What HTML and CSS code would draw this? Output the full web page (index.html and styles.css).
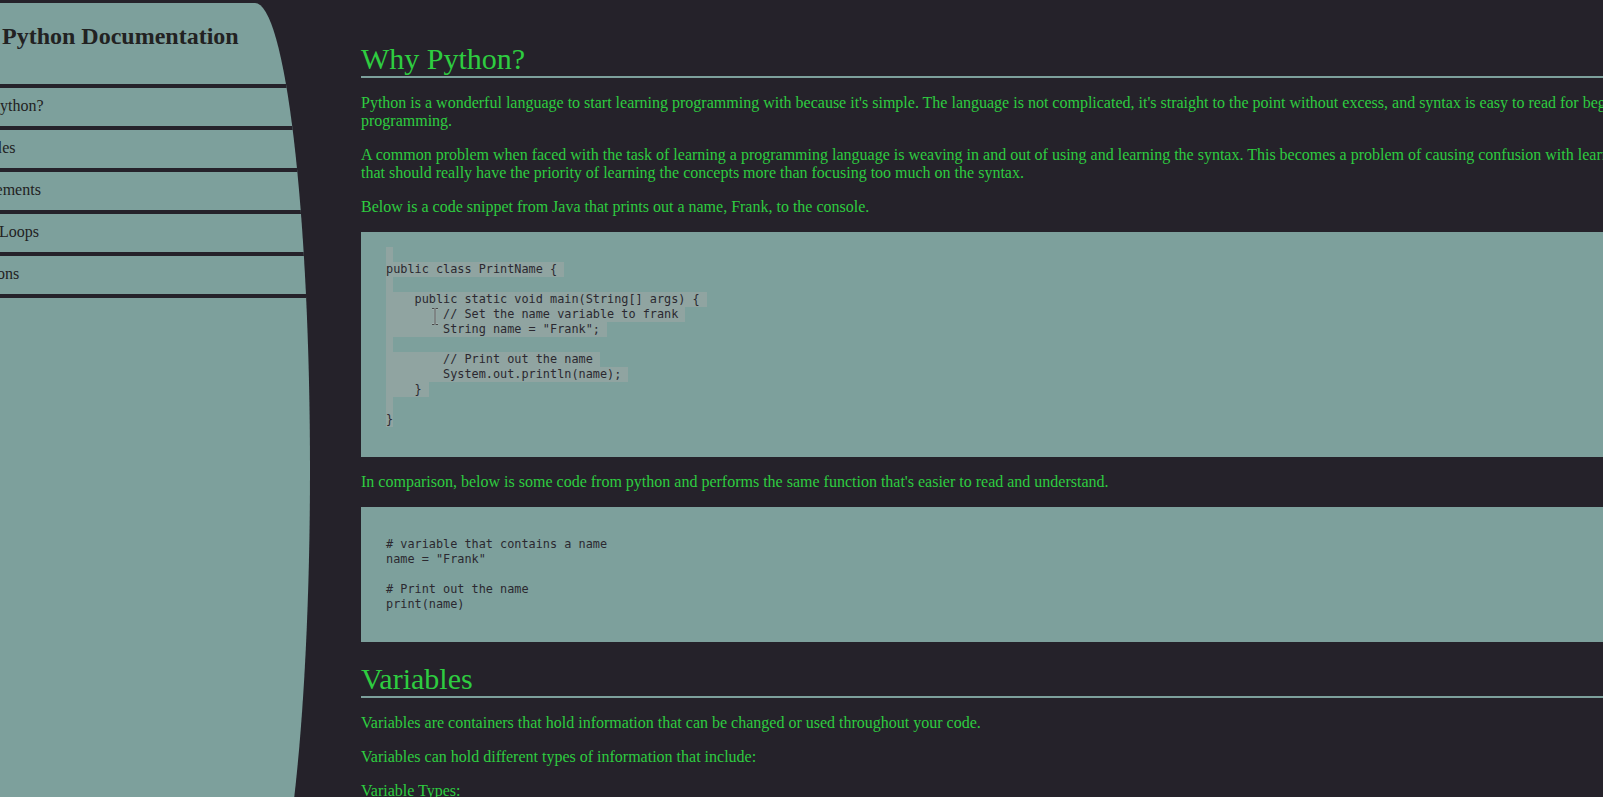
FILE: index.html
```html
<!DOCTYPE html>
<html lang="en">
<head>
<meta charset="utf-8">
<title>Python Documentation</title>
<link rel="stylesheet" href="styles.css">
</head>
<body>
<div class="page">
  <nav class="sidebar" id="navbar">
    <header class="nav-title">Python Documentation</header>
    <ul class="nav-list">
      <li class="nav-item"><a class="nav-link" href="#Why_Python?">Why Python?</a></li>
      <li class="nav-item"><a class="nav-link" href="#Variables">Variables</a></li>
      <li class="nav-item"><a class="nav-link" href="#If_Statements">If Statements</a></li>
      <li class="nav-item"><a class="nav-link" href="#While_Loops">While Loops</a></li>
      <li class="nav-item"><a class="nav-link" href="#Functions">Functions</a></li>
    </ul>
  </nav>
  <main class="content" id="main-doc">
    <section class="main-section" id="Why_Python?">
      <h1 class="section-title">Why Python?</h1>
      <p class="text">Python is a wonderful language to start learning programming with because it's simple. The language is not complicated, it's straight to the point without excess, and syntax is easy to read for beginners who are new to programming.</p>
      <p class="text">A common problem when faced with the task of learning a programming language is weaving in and out of using and learning the syntax. This becomes a problem of causing confusion with learners who are beginners that should really have the priority of learning the concepts more than focusing too much on the syntax.</p>
      <p class="text">Below is a code snippet from Java that prints out a name, Frank, to the console.</p>
      <div class="code"><svg class="cursor" viewBox="0 0 7 17" width="7" height="17"><path d="M0 0.5h2.5m1 0h2.5M3 1v15M0 16.5h2.5m1 0h2.5" fill="none" stroke="#f4f4f4" stroke-width="2.2" stroke-opacity="0.35"/><path d="M0 0.5h2.5m1 0h2.5M3 1v15M0 16.5h2.5m1 0h2.5" fill="none" stroke="#4a4a4a" stroke-width="1"/></svg>
        <span class="line"><span class="sel"> </span></span>
        <span class="line"><span class="sel">public class PrintName { </span></span>
        <span class="line"><span class="sel"> </span></span>
        <span class="line"><span class="sel">    public static void main(String[] args) { </span></span>
        <span class="line"><span class="sel">        // Set the name variable to frank </span></span>
        <span class="line"><span class="sel">        String name = "Frank"; </span></span>
        <span class="line"><span class="sel"> </span></span>
        <span class="line"><span class="sel">        // Print out the name </span></span>
        <span class="line"><span class="sel">        System.out.println(name); </span></span>
        <span class="line"><span class="sel">    } </span></span>
        <span class="line"><span class="sel"> </span></span>
        <span class="line"><span class="sel">}</span></span>
        <span class="line"></span>
      </div>
      <p class="text">In comparison, below is some code from python and performs the same function that's easier to read and understand.</p>
      <div class="code">
        <span class="line"></span>
        <span class="line"># variable that contains a name</span>
        <span class="line">name = "Frank"</span>
        <span class="line"></span>
        <span class="line"># Print out the name</span>
        <span class="line">print(name)</span>
        <span class="line"></span>
      </div>
    </section>
    <section class="main-section" id="Variables">
      <h1 class="section-title">Variables</h1>
      <p class="text">Variables are containers that hold information that can be changed or used throughout your code.</p>
      <p class="text">Variables can hold different types of information that include:</p>
      <p class="text">Variable Types:</p>
      <ul class="type-list">
        <li>Strings</li>
        <li>Integers</li>
        <li>Floats</li>
        <li>Booleans</li>
      </ul>
    </section>
  </main>
</div>
</body>
</html>
```

FILE: styles.css
```css
html {
  overflow: hidden;
}

body {
  margin: 0;
  background: #25222a;
  font-family: "Liberation Serif", "Times New Roman", serif;
}

.page {
  display: flex;
  align-items: flex-start;
}

.sidebar {
  flex: 0 0 310px;
  width: 310px;
  height: 934px;
  margin-top: 3px;
  background: #7da09c;
  border-radius: 0 55px 55px 0 / 0 467px 467px 0;
  overflow: hidden;
}

.nav-title {
  height: 81px;
  box-sizing: border-box;
  padding: 20px 0 0 2px;
  font-size: 24px;
  line-height: 27px;
  font-weight: bold;
  color: #222;
  white-space: nowrap;
}

.nav-list {
  list-style: none;
  margin: 0;
  padding: 0;
  border-bottom: 4px solid #25222a;
}

.nav-item {
  border-top: 4px solid #25222a;
}

.nav-link {
  display: block;
  height: 38px;
  box-sizing: border-box;
  padding-top: 9px;
  font-size: 16px;
  line-height: 18.4px;
  text-indent: -44px;
  color: #222;
  text-decoration: none;
  white-space: nowrap;
}

.content {
  flex: 0 0 1404px;
  width: 1404px;
  margin-left: 51px;
  padding-top: 22px;
  color: #2ecc40;
  font-size: 16px;
  line-height: 18px;
}

.section-title {
  font-size: 30px;
  line-height: 34px;
  font-weight: normal;
  margin: 20px 0 16px;
  border-bottom: 2px solid #7da09c;
}

.text {
  margin: 0 0 16px;
}

.code {
  position: relative;
  margin: 0 0 16px;
  padding: 15px 25px;
  background: #7da09c;
  color: #2b2930;
  font-family: "DejaVu Sans Mono", monospace;
  font-size: 11.85px;
  line-height: 15px;
}

.line {
  display: block;
  height: 15px;
  white-space: pre;
}

.sel {
  display: inline-block;
  vertical-align: top;
  background: #90a4a1;
  white-space: pre;
}

.cursor {
  position: absolute;
  left: 71px;
  top: 76px;
}

.type-list {
  margin: 0 0 16px;
}
```
